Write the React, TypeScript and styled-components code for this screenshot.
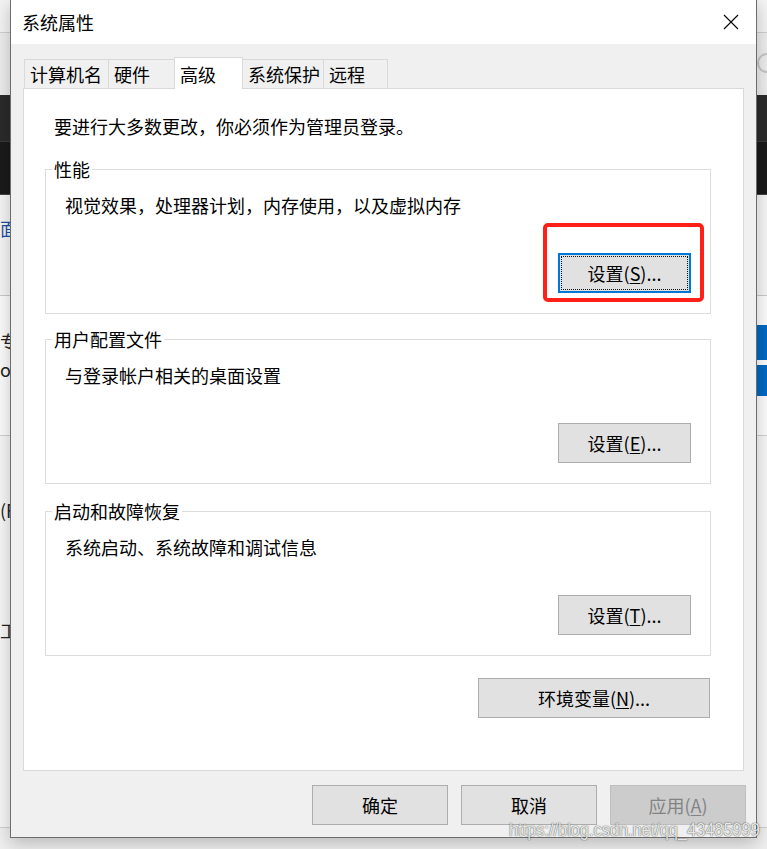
import styled, { createGlobalStyle } from 'styled-components';

const FONT = `"Noto Sans CJK SC", "Noto Sans", sans-serif`;

const GlobalStyle = createGlobalStyle`
  html, body {
    margin: 0;
    padding: 0;
  }
  body {
    width: 767px;
    height: 849px;
    overflow: hidden;
    font-family: ${FONT};
    color: #000;
  }
`;

// 背景のデスクトップ（ダイアログの外側にわずかに見える部分）
const Desktop = styled.div`
  position: relative;
  width: 767px;
  height: 849px;
  overflow: hidden;
  display: flex;
  flex-direction: column;
  background: #efefef;
  font-family: ${FONT};
`;

const Band = styled.div<{ $h: number; $bg: string; $line?: string }>`
  flex: none;
  box-sizing: border-box;
  height: ${(p) => p.$h}px;
  background: ${(p) => p.$bg};
  border-bottom: ${(p) => (p.$line ? `1px solid ${p.$line}` : 'none')};
  display: flex;
  justify-content: space-between;
  align-items: flex-start;
`;

const Fragment = styled.span<{ $mt: number; $color?: string }>`
  margin-top: ${(p) => p.$mt}px;
  font-size: 18px;
  line-height: 22px;
  color: ${(p) => p.$color || '#222'};
  white-space: nowrap;
`;

const FragmentStack = styled.div`
  display: flex;
  flex-direction: column;
`;

const BlueTiles = styled.div`
  display: flex;
  flex-direction: column;
  gap: 5px;
  margin-top: 29px;
`;

const BlueTile = styled.div<{ $h: number }>`
  width: 12px;
  height: ${(p) => p.$h}px;
  background: #0067c0;
`;

const SearchRing = styled.div`
  margin-top: 20px;
  margin-right: -10px;
  width: 16px;
  height: 16px;
  border: 2px solid #c4c4c4;
  border-radius: 50%;
`;

// ダイアログ本体
const Window = styled.div`
  position: absolute;
  left: 10px;
  top: -1px;
  width: 747px;
  height: 839px;
  box-sizing: border-box;
  border: 1px solid #6d6d6d;
  background: #f0f0f0;
  box-shadow: 0 6px 16px rgba(0, 0, 0, 0.22);
  display: flex;
  flex-direction: column;
  font-size: 18px;
`;

const TitleBar = styled.div`
  flex: none;
  height: 44px;
  background: #fff;
  display: flex;
  align-items: center;
  justify-content: space-between;
  padding-left: 11px;
`;

const Title = styled.span`
  line-height: 24px;
`;

const CloseButton = styled.button`
  width: 50px;
  height: 44px;
  padding: 0;
  border: 0;
  background: transparent;
  display: flex;
  align-items: center;
  justify-content: center;
`;

const Body = styled.div`
  flex: 1;
  display: flex;
  flex-direction: column;
  padding: 13px 12px 12px;
`;

const TabRow = styled.div`
  position: relative;
  z-index: 1;
  display: flex;
  align-items: flex-end;
  height: 31px;
  padding-left: 1px;
`;

const Tab = styled.div<{ $w: number; $active?: boolean }>`
  box-sizing: border-box;
  width: ${(p) => p.$w}px;
  height: ${(p) => (p.$active ? 32 : 29)}px;
  margin-bottom: ${(p) => (p.$active ? -1 : 0)}px;
  margin-left: -1px;
  padding-left: 5px;
  border: 1px solid #d9d9d9;
  border-bottom: none;
  background: ${(p) => (p.$active ? '#fff' : '#f0f0f0')};
  display: flex;
  align-items: center;
  line-height: 24px;

  &:first-child {
    margin-left: 0;
  }
`;

const Panel = styled.div`
  box-sizing: border-box;
  height: 683px;
  border: 1px solid #d9d9d9;
  background: #fff;
  padding: 25px 32px 0 21px;
  display: flex;
  flex-direction: column;
`;

const Intro = styled.div`
  margin-left: 9px;
  line-height: 24px;
`;

const Group = styled.fieldset<{ $mt: number }>`
  margin: ${(p) => p.$mt}px 0 0 0;
  padding: 0 19px 20px 0;
  border: 1px solid #dcdcdc;
  min-inline-size: 0;
  display: flex;
  flex-direction: column;
`;

const Legend = styled.legend`
  margin-left: 6px;
  padding: 0 2px;
  line-height: 24px;
`;

const Desc = styled.div`
  margin: 12px 0 0 19px;
  line-height: 24px;
`;

const ButtonRow = styled.div<{ $mt: number; $pr?: number }>`
  margin-top: ${(p) => p.$mt}px;
  padding-right: ${(p) => p.$pr || 0}px;
  display: flex;
  justify-content: flex-end;
`;

const ButtonSlot = styled.div`
  position: relative;
`;

const Highlight = styled.div`
  position: absolute;
  left: -15px;
  top: -30px;
  width: 161px;
  height: 79px;
  box-sizing: border-box;
  border: 4px solid #ff2117;
  border-radius: 5px;
  pointer-events: none;
`;

const Button = styled.button<{ $w: number; $focused?: boolean }>`
  box-sizing: border-box;
  width: ${(p) => p.$w}px;
  height: 40px;
  padding: 0;
  border: ${(p) => (p.$focused ? '2px solid #0078d7' : '1px solid #adadad')};
  outline: ${(p) => (p.$focused ? '1px dotted #111' : 'none')};
  outline-offset: -4px;
  background: #e1e1e1;
  color: #000;
  font-family: ${FONT};
  font-size: 18px;
  line-height: 24px;

  &:disabled {
    background: #cccccc;
    border-color: #bfbfbf;
    color: #838383;
  }

  u {
    text-underline-offset: 2px;
  }
`;

const Footer = styled.div`
  display: flex;
  justify-content: flex-end;
  gap: 13px;
  margin-top: 14px;
  margin-right: -2px;
`;

const Watermark = styled.div`
  position: absolute;
  left: 509px;
  top: 819px;
  font-family: "Liberation Sans", Arial, sans-serif;
  font-size: 19px;
  line-height: 22px;
  color: rgba(255, 255, 255, 0.9);
  text-shadow: 0 0 1px rgba(0, 0, 0, 0.7), 0 0 2px rgba(0, 0, 0, 0.35);
  transform: scaleX(0.86);
  transform-origin: left center;
  white-space: nowrap;
  pointer-events: none;
`;

const tabs = [
  { label: '计算机名', w: 85 },
  { label: '硬件', w: 67 },
  { label: '高级', w: 69, active: true },
  { label: '系统保护', w: 82 },
  { label: '远程', w: 65 },
];

const groups = [
  { title: '性能', desc: '视觉效果，处理器计划，内存使用，以及虚拟内存', key: 'S', mt: 19, focused: true },
  { title: '用户配置文件', desc: '与登录帐户相关的桌面设置', key: 'E', mt: 13 },
  { title: '启动和故障恢复', desc: '系统启动、系统故障和调试信息', key: 'T', mt: 15 },
];

const CloseIcon = () => (
  <svg width="16" height="16" viewBox="0 0 16 16">
    <path d="M1 1 L15 15 M15 1 L1 15" stroke="#000" strokeWidth="1.1" fill="none" />
  </svg>
);

export default function App() {
  return (
    <>
      <GlobalStyle />
      <Desktop>
        <Band $h={33} $bg="#f3f3f3" $line="#cfcfcf">
          <span />
        </Band>
        <Band $h={62} $bg="#ececec">
          <span />
          <SearchRing />
        </Band>
        <Band $h={47} $bg="#2b2b2b" $line="#3a3a3a" />
        <Band $h={53} $bg="#1a1a1a" $line="#444" />
        <Band $h={101} $bg="#f5f5f5" $line="#c9c9c9">
          <Fragment $mt={22} $color="#1c4fa1">面</Fragment>
        </Band>
        <Band $h={140} $bg="#fbfbfb" $line="#cfcfcf">
          <FragmentStack>
            <Fragment $mt={34}>专</Fragment>
            <Fragment $mt={6}>o</Fragment>
          </FragmentStack>
          <BlueTiles>
            <BlueTile $h={35} />
            <BlueTile $h={31} />
          </BlueTiles>
        </Band>
        <Band $h={392} $bg="#f6f6f6" $line="#cfcfcf">
          <FragmentStack>
            <Fragment $mt={63}>(F</Fragment>
            <Fragment $mt={98}>工</Fragment>
          </FragmentStack>
        </Band>
        <Band $h={21} $bg="#efefef" />

        <Window>
          <TitleBar>
            <Title>系统属性</Title>
            <CloseButton aria-label="关闭">
              <CloseIcon />
            </CloseButton>
          </TitleBar>
          <Body>
            <TabRow>
              {tabs.map((t) => (
                <Tab key={t.label} $w={t.w} $active={t.active}>
                  {t.label}
                </Tab>
              ))}
            </TabRow>
            <Panel>
              <Intro>要进行大多数更改，你必须作为管理员登录。</Intro>
              {groups.map((g) => (
                <Group key={g.title} $mt={g.mt}>
                  <Legend>{g.title}</Legend>
                  <Desc>{g.desc}</Desc>
                  <ButtonRow $mt={36}>
                    <ButtonSlot>
                      <Button $w={133} $focused={g.focused}>
                        设置(<u>{g.key}</u>)...
                      </Button>
                      {g.focused && <Highlight />}
                    </ButtonSlot>
                  </ButtonRow>
                </Group>
              ))}
              <ButtonRow $mt={22} $pr={1}>
                <Button $w={232}>
                  环境变量(<u>N</u>)...
                </Button>
              </ButtonRow>
            </Panel>
            <Footer>
              <Button $w={136}>确定</Button>
              <Button $w={136}>取消</Button>
              <Button $w={136} disabled>
                应用(<u>A</u>)
              </Button>
            </Footer>
          </Body>
        </Window>
        <Watermark>https://blog.csdn.net/qq_43485999</Watermark>
      </Desktop>
    </>
  );
}
